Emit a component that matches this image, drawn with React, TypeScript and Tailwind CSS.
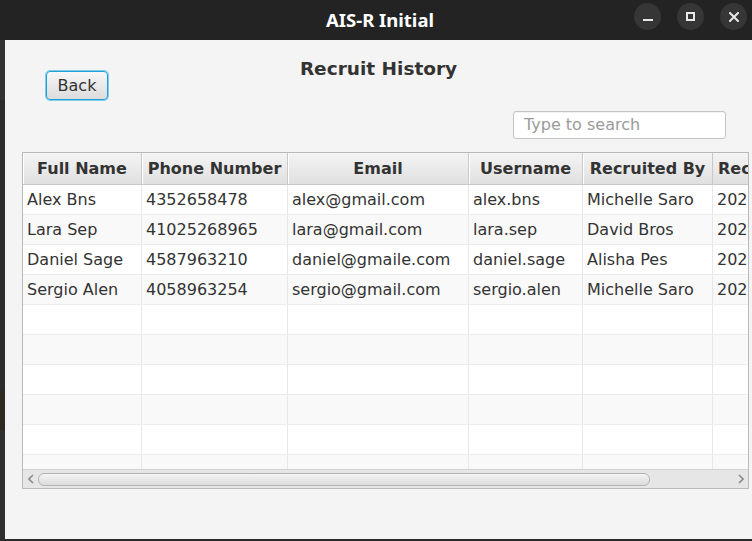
import React from "react";

const rows: string[][] = [
  ["Alex Bns", "4352658478", "alex@gmail.com", "alex.bns", "Michelle Saro", "2023-04-12"],
  ["Lara Sep", "41025268965", "lara@gmail.com", "lara.sep", "David Bros", "2023-05-03"],
  ["Daniel Sage", "4587963210", "daniel@gmaile.com", "daniel.sage", "Alisha Pes", "2023-06-21"],
  ["Sergio Alen", "4058963254", "sergio@gmail.com", "sergio.alen", "Michelle Saro", "2023-07-09"],
  ["", "", "", "", "", ""],
  ["", "", "", "", "", ""],
  ["", "", "", "", "", ""],
  ["", "", "", "", "", ""],
  ["", "", "", "", "", ""],
  ["", "", "", "", "", ""],
];

const headers = ["Full Name", "Phone Number", "Email", "Username", "Recruited By", "Recruited Date"];

function TitleBar() {
  return (
    <div className="h-[40px] bg-[#232323] flex items-center relative shrink-0">
      <div className="flex-1 flex justify-center pl-[8px]">
        <span
          className="text-white font-bold text-[18.5px] tracking-[0px]"
          style={{ fontFamily: '"Noto Sans", "DejaVu Sans", sans-serif' }}
        >
          AIS-R Initial
        </span>
      </div>
      <div className="absolute right-[5px] top-[3px] flex gap-[16px]">
        <div className="w-[27px] h-[27px] rounded-full bg-[#363636] flex items-center justify-center">
          <div className="w-[10px] h-[2px] bg-[#e8e8e8] mt-[6px]" />
        </div>
        <div className="w-[27px] h-[27px] rounded-full bg-[#363636] flex items-center justify-center">
          <div className="w-[9px] h-[9px] border-[2px] border-[#e8e8e8]" />
        </div>
        <div className="w-[27px] h-[27px] rounded-full bg-[#363636] flex items-center justify-center">
          <svg width="10" height="10" viewBox="0 0 10 10">
            <path d="M1 1 L9 9 M9 1 L1 9" stroke="#e8e8e8" strokeWidth="2" strokeLinecap="square" />
          </svg>
        </div>
      </div>
    </div>
  );
}

function ScrollBar() {
  return (
    <div className="h-[19px] bg-[#e6e6e6] border-t border-[#d4d4d4] flex items-center shrink-0">
      <div className="w-[15px] flex justify-center">
        <svg width="6" height="10" viewBox="0 0 6 10">
          <path d="M5 1 L1 5 L5 9" stroke="#8c8c8c" strokeWidth="1.6" fill="none" />
        </svg>
      </div>
      <div className="w-[612px] h-[13px] rounded-[6px] border border-[#b4b4b4] bg-gradient-to-b from-[#f4f4f4] to-[#dcdcdc]" />
      <div className="flex-1" />
      <div className="w-[14px] flex justify-center">
        <svg width="6" height="10" viewBox="0 0 6 10">
          <path d="M1 1 L5 5 L1 9" stroke="#8c8c8c" strokeWidth="1.6" fill="none" />
        </svg>
      </div>
    </div>
  );
}

export default function App() {
  const gridCols = "grid grid-cols-[119px_146px_181px_114px_130px_160px]";
  return (
    <div
      className="w-[752px] h-[541px] flex flex-col bg-[#2a2a2a] overflow-hidden text-[#333333]"
      style={{ fontFamily: '"DejaVu Sans", Verdana, sans-serif' }}
    >
      <TitleBar />
      <div className="flex flex-1 min-h-0">
        <div className="w-[5px] flex flex-col shrink-0">
          <div className="h-[60px] bg-[#333333]" />
          <div className="h-[290px] bg-[#2c2c2c]" />
          <div className="h-[40px] bg-[#2e2a22]" />
          <div className="flex-1 bg-[#2f2f2f]" />
        </div>
        <div className="flex-1 bg-[#f4f4f4] flex flex-col min-w-0">
          {/* header */}
          <div className="grid grid-cols-[1fr_auto_1fr] pt-[18px]">
            <div className="pl-[41px]">
              <button className="mt-[13px] w-[62px] h-[29px] rounded-[4px] border border-[#1e9fd6] shadow-[0_0_0_1px_#7fcbea] bg-gradient-to-b from-[#f7f7f7] to-[#dcdcdc] text-[16px] text-[#333333] leading-none flex items-center justify-center">
                Back
              </button>
            </div>
            <div className="text-[18.5px] leading-[22px] font-bold text-[#333333]">Recruit History</div>
            <div />
          </div>
          {/* search */}
          <div className="flex justify-end pr-[26px] mt-[11px]">
            <div className="w-[213px] h-[28px] bg-white border border-[#c4c4c4] rounded-[3px] shadow-[inset_0_1px_1px_rgba(0,0,0,0.06)] flex items-center pl-[10px]">
              <span className="text-[16px] text-[#9b9b9b] leading-none">Type to search</span>
            </div>
          </div>
          {/* table */}
          <div className="ml-[17px] mt-[13px] w-[727px] h-[337px] border border-[#b9b9b9] bg-white flex flex-col overflow-hidden">
            <div className={`${gridCols} h-[32px] shrink-0 bg-gradient-to-b from-[#f4f4f4] to-[#e0e0e0] border-b border-[#c8c8c8]`}>
              {headers.map((h, i) => (
                <div
                  key={h}
                  className={
                    i === 5
                      ? "flex items-center pl-[5px] text-[16px] font-bold whitespace-nowrap overflow-hidden"
                      : "flex items-center justify-center border-r border-[#c9c9c9] shadow-[inset_1px_0_0_#ffffff] text-[16px] font-bold whitespace-nowrap overflow-hidden"
                  }
                >
                  {h}
                </div>
              ))}
            </div>
            <div className="flex-1 min-h-0 overflow-hidden">
              {rows.map((r, ri) => (
                <div
                  key={ri}
                  className={`${gridCols} h-[30px] border-b border-[#ececec] ${ri % 2 === 0 ? "bg-white" : "bg-[#f9f9f9]"}`}
                >
                  {r.map((c, ci) => (
                    <div
                      key={ci}
                      className={
                        ci === 5
                          ? "flex items-center pl-[4px] text-[16px] whitespace-nowrap overflow-hidden"
                          : "flex items-center pl-[4px] border-r border-[#e8e8e8] text-[16px] whitespace-nowrap overflow-hidden"
                      }
                    >
                      {c}
                    </div>
                  ))}
                </div>
              ))}
            </div>
            <ScrollBar />
          </div>
          <div className="flex-1" />
        </div>
      </div>
      <div className="h-[2px] bg-[#2b2b2b] shrink-0" />
    </div>
  );
}
